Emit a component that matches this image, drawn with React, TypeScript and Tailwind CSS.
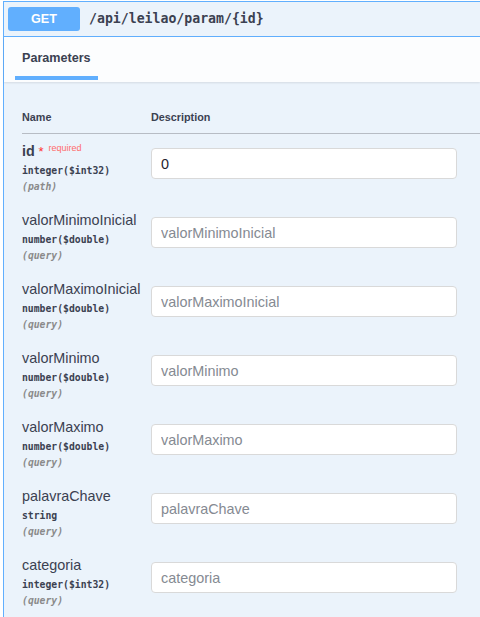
import React from 'react';

type Param = {
  name: string;
  type: string;
  location: 'path' | 'query';
  required?: boolean;
  value?: string;
};

const params: Param[] = [
  { name: 'id', type: 'integer($int32)', location: 'path', required: true, value: '0' },
  { name: 'valorMinimoInicial', type: 'number($double)', location: 'query' },
  { name: 'valorMaximoInicial', type: 'number($double)', location: 'query' },
  { name: 'valorMinimo', type: 'number($double)', location: 'query' },
  { name: 'valorMaximo', type: 'number($double)', location: 'query' },
  { name: 'palavraChave', type: 'string', location: 'query' },
  { name: 'categoria', type: 'integer($int32)', location: 'query' },
];

const mono = "font-['DejaVu_Sans_Mono',monospace]";

function ParamRow({ p }: { p: Param }) {
  return (
    <div className="flex h-[69px] items-start">
      <div className="w-[129px] shrink-0">
        <div
          className={`h-[18px] whitespace-nowrap text-[14.4px] leading-[18px] text-[#3b4151] ${
            p.required ? 'font-bold' : ''
          }`}
        >
          {p.name}
          {p.required && (
            <>
              <span className="text-[13px] font-normal text-[#ff3333]">{' *'}</span>
              <span className="relative -top-[5px] ml-[5px] text-[9px] font-normal text-[#ff6b6b]">
                required
              </span>
            </>
          )}
        </div>
        <div className={`mt-[3px] h-[16px] text-[9.75px] leading-[16px] font-bold text-[#3b4151] ${mono}`}>
          {p.type}
        </div>
        <div className={`h-[16px] text-[9.75px] leading-[16px] font-bold italic text-[#8a8a8a] ${mono}`}>
          ({p.location})
        </div>
      </div>
      <input
        className="mt-[6px] h-[31px] w-[306px] rounded-[4px] border border-[#d9d9d9] bg-white pl-[9px] text-[14.4px] text-[#1f2430] outline-none placeholder:text-[#858a92]"
        defaultValue={p.value}
        placeholder={p.value === undefined ? p.name : undefined}
      />
    </div>
  );
}

export default function App() {
  return (
    <div className="h-[617px] overflow-hidden bg-white pt-[1px] font-['Liberation_Sans',Arial,sans-serif]">
      <div className="ml-[3px] min-h-[640px] border-t border-l border-[#61affe] bg-[#ebf3fb]">
        {/* summary */}
        <div className="flex h-[35px] items-center border-b border-[#61affe] pl-[4px]">
          <span className="flex h-[24px] w-[72px] items-center justify-center rounded-[3px] bg-[#61affe] text-[12.6px] font-bold text-white">
            GET
          </span>
          <span className={`ml-[9px] text-[13.2px] font-bold text-[#3b4151] ${mono}`}>
            /api/leilao/param/{'{id}'}
          </span>
        </div>

        {/* tab header */}
        <div className="bg-[#fcfdfe] pt-[13px] pb-[2px] shadow-[0_1px_2px_rgba(0,0,0,0.1)]">
          <div className="ml-[11px] w-[83px]">
            <div className="pl-[7px] text-[12.6px] leading-[16px] font-bold text-[#3b4151]">Parameters</div>
            <div className="mt-[10px] h-[4px] bg-[#61affe]" />
          </div>
        </div>

        {/* params table */}
        <div className="pl-[18px]">
          <div className="flex border-b border-[#b7bcc4] pt-[29px] pb-[10px] text-[10.8px] leading-[12px] font-bold text-[#3b4151]">
            <div className="w-[129px]">Name</div>
            <div>Description</div>
          </div>
          <div className="pt-[8px]">
            {params.map(p => (
              <ParamRow key={p.name} p={p} />
            ))}
          </div>
        </div>
      </div>
    </div>
  );
}
